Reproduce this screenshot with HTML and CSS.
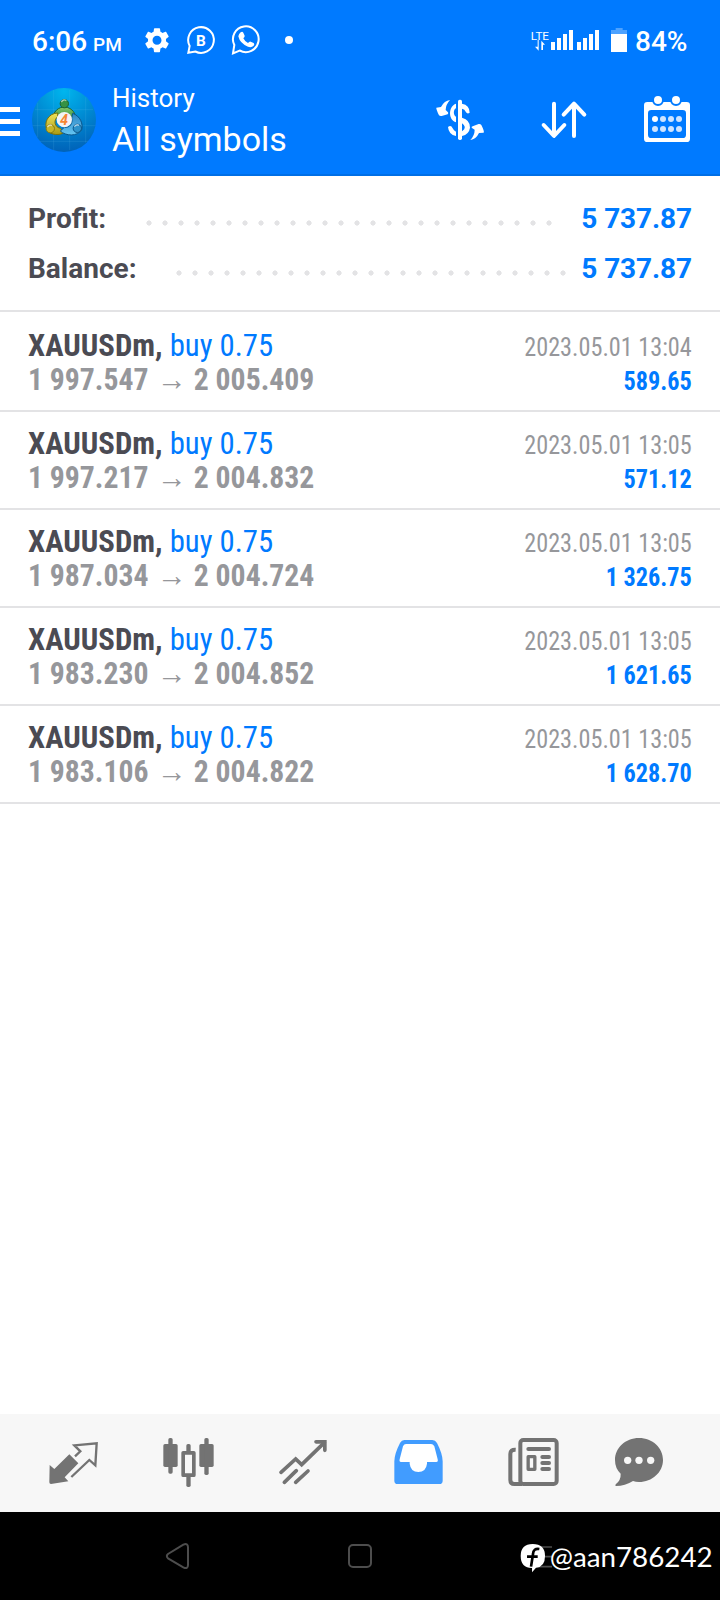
FILE: index.html
```html
<!DOCTYPE html>
<html lang="en">
<head>
<meta charset="utf-8">
<title>History</title>
<link rel="stylesheet" href="styles.css">
</head>
<body>
<div class="screen">
  <header class="top">
    <div class="status">
      <div class="clock">6:06 <span class="ampm">PM</span></div>
      <svg class="notifs" viewBox="426 60 474 120" fill="none" stroke="#fff" stroke-width="6">
        <path transform="translate(426 75.500) scale(3.75)" fill="#fff" stroke="none" d="M19.140 12.940c.040-.300.060-.610.060-.940 0-.320-.020-.640-.070-.940l2.030-1.580c.180-.140.230-.410.120-.610l-1.920-3.320c-.120-.220-.370-.290-.590-.220l-2.390.960c-.500-.380-1.030-.700-1.620-.940l-.360-2.540c-.040-.240-.240-.410-.480-.410h-3.840c-.240 0-.430.170-.470.410l-.360 2.540c-.590.240-1.130.570-1.620.940l-2.390-.960c-.220-.080-.470 0-.590.220L2.740 8.870c-.120.210-.080.470.120.610l2.030 1.580c-.050.300-.090.630-.090.940s.020.640.070.940l-2.030 1.580c-.180.140-.230.410-.120.610l1.920 3.320c.120.220.370.290.590.220l2.390-.960c.500.380 1.030.700 1.620.940l.360 2.540c.050.240.240.410.480.410h3.840c.240 0 .440-.170.470-.410l.360-2.540c.590-.240 1.130-.560 1.620-.940l2.390.960c.220.080.470 0 .590-.220l1.920-3.320c.120-.220.070-.470-.120-.610l-2.010-1.580zM12 15.600c-1.980 0-3.600-1.620-3.600-3.600s1.620-3.600 3.600-3.600 3.600 1.620 3.600 3.600-1.620 3.600-3.600 3.600z"/>
        <path d="M586 154.500 A38.500 38.500 0 1 0 569 138 L565 158Z"/>
        <text x="603" y="137" class="biz">B</text>
        <path d="M719 151.500 A38.500 38.500 0 1 0 703 135 L699 160Z"/>
        <path fill="#fff" stroke="none" d="M722 97 q5-4 8 1 l4 9 q1 3-4 8 q4 9 14 14 q5-6 8-4 l9 4 q4 3 0 8 q-7 7-17 3 q-24-9-29-31 q0-6 7-12z"/>
        <circle cx="867" cy="120" r="12" fill="#fff" stroke="none"/>
      </svg>
      <svg class="signal" viewBox="510 60 300 120" fill="#fff">
        <text x="512" y="120" class="lte" textLength="55" lengthAdjust="spacingAndGlyphs">LTE</text>
        <path d="M533 120v20h-8l11 12v-32zM544 150v-28l11 12h-6v16z"/>
        <path d="M573 126h12v24h-12zM591 114h12v36h-12zM609 102h12v48h-12zM627 90h12v60h-12zM651 126h12v24h-12zM669 114h12v36h-12zM687 102h12v48h-12zM705 90h12v60h-12z"/>
        <path opacity=".3" d="M767 84h21v6h13v12h-48V90h14z"/>
        <path d="M753 102h48v54h-48z"/>
      </svg>
      <div class="pct">84%</div>
    </div>
    <div class="bar">
      <div class="burger"><i></i><i></i><i></i></div>
      <svg class="logo" viewBox="96 54 192 192">
        <defs>
          <radialGradient id="sky" cx=".5" cy=".05" r=".95"><stop offset="0" stop-color="#00b6ee"/><stop offset=".5" stop-color="#008bd3"/><stop offset="1" stop-color="#0062b8"/></radialGradient>
          <linearGradient id="gr" x2="0" y2="1"><stop offset="0" stop-color="#86c96c"/><stop offset="1" stop-color="#237f35"/></linearGradient>
          <linearGradient id="ye" x2="0" y2="1"><stop offset="0" stop-color="#eee45c"/><stop offset="1" stop-color="#a99a12"/></linearGradient>
          <linearGradient id="bl" x2="0" y2="1"><stop offset="0" stop-color="#2b85c4"/><stop offset="1" stop-color="#65c6f3"/></linearGradient>
        </defs>
        <circle cx="192" cy="150" r="96" fill="url(#sky)"/>
        <path d="M161 60v180M209 60v180M257 82v136M113 98v104M105 119h174M98 167h188M120 214h144" stroke="#6fc6ee" stroke-opacity=".22" stroke-width="2"/>
        <g stroke-width="3">
          <path d="M159 147 A34 34 0 1 1 226 153 L211 143 A22 22 0 0 0 174 143Z" fill="url(#gr)" stroke="#1b6530"/>
          <path d="M173 129 C143 130 130 160 142 181 C153 197 181 196 191 188 L181 175 C163 171 160 151 173 140Z" fill="url(#ye)" stroke="#79700a"/>
          <path d="M218 130 C241 138 250 162 245 179 C233 201 196 198 181 183 L193 172 C210 174 219 160 215 145Z" fill="url(#bl)" stroke="#09558b"/>
          <circle cx="193" cy="101" r="12.500" fill="#369244" stroke="#1b6530"/>
          <circle cx="151" cy="176" r="12.500" fill="#c5b52a" stroke="#877c12"/>
          <circle cx="232" cy="175" r="12.500" fill="#2d92cb" stroke="#09558b"/>
        </g>
        <path d="M184 96q7-10 15-4M142 171q7-9 14-4M223 170q7-9 14-4" stroke="#fff" stroke-opacity=".6" stroke-width="4" fill="none"/>
        <circle cx="193" cy="149" r="23" fill="#f3f3f5"/>
        <text x="192" y="164" class="four">4</text>
      </svg>
      <div class="titles">
        <div class="sub">History</div>
        <div class="title">All symbols</div>
      </div>
      <svg class="tools" viewBox="210 270 810 180" fill="none" stroke="#fff">
        <g stroke="none" fill="#fff">
          <path d="M270 300 Q253 302 243 321 L229 323 Q228 327 237 346 Q240 349 245 348 L263 343 Q266 340 264 337 L257 330 Q257 314 270 300Z"/>
          <path d="M331 420 Q348 418 357 399 L371 398 Q374 395 364 375 Q361 371 356 372 L338 379 Q332 381 336 384 L344 389 Q344 406 331 420Z"/>
          <rect x="294" y="299" width="12" height="121" rx="5"/>
          <path d="M288 311 V325 C280 328 279 346 288 350 V367 C264 360 264 319 288 311Z"/>
          <path d="M306 311 Q329 315 329 338 Q321 344 316 334 Q315 328 306 326Z"/>
          <path d="M306 353 Q331 360 330 383 Q327 403 306 408 V394 Q324 383 306 370Z"/>
          <path d="M288 408 Q266 404 264 381 Q273 374 278 385 Q281 392 288 395Z"/>
        </g>
        <path d="M582 311V407M551 375L582 408L613 375M642 408V313M611 344L642 311L673 344" stroke-width="12" stroke-linecap="round" stroke-linejoin="round"/>
        <path stroke="none" fill="#fff" fill-rule="evenodd" d="M862 306H980Q990 306 990 316V416Q990 426 980 426H862Q852 426 852 416V316Q852 306 862 306ZM874 330Q864 330 864 340V404Q864 414 874 414H968Q978 414 978 404V340Q978 330 968 330Z"/>
        <g fill="#fff" stroke="#007aff" stroke-width="6"><circle cx="894" cy="300" r="15"/><circle cx="948" cy="300" r="15"/></g>
        <g stroke="none" fill="#cfe4ff"><circle cx="885" cy="357" r="9" fill="#fff"/><circle cx="909" cy="357" r="9"/><circle cx="933" cy="357" r="9"/><circle cx="957" cy="357" r="9"/><circle cx="885" cy="387" r="9"/><circle cx="909" cy="387" r="9"/><circle cx="933" cy="387" r="9"/><circle cx="957" cy="387" r="9"/></g>
      </svg>
    </div>
  </header>

  <section class="summary">
    <div class="line"><b class="lbl profit">Profit:</b><span class="dots d-profit"></span><b class="val">5 737.87</b></div>
    <div class="line"><b class="lbl balance">Balance:</b><span class="dots d-balance"></span><b class="val">5 737.87</b></div>
  </section>

  <main class="deals">
    <div class="deal"><div><div class="sym"><b>XAUUSDm,</b> <span>buy 0.75</span></div><div class="px">1 997.547 <i>→</i> 2 005.409</div></div><div class="right"><div class="date">2023.05.01 13:04</div><div class="gain">589.65</div></div></div>
    <div class="deal"><div><div class="sym"><b>XAUUSDm,</b> <span>buy 0.75</span></div><div class="px">1 997.217 <i>→</i> 2 004.832</div></div><div class="right"><div class="date">2023.05.01 13:05</div><div class="gain">571.12</div></div></div>
    <div class="deal"><div><div class="sym"><b>XAUUSDm,</b> <span>buy 0.75</span></div><div class="px">1 987.034 <i>→</i> 2 004.724</div></div><div class="right"><div class="date">2023.05.01 13:05</div><div class="gain">1 326.75</div></div></div>
    <div class="deal"><div><div class="sym"><b>XAUUSDm,</b> <span>buy 0.75</span></div><div class="px">1 983.230 <i>→</i> 2 004.852</div></div><div class="right"><div class="date">2023.05.01 13:05</div><div class="gain">1 621.65</div></div></div>
    <div class="deal"><div><div class="sym"><b>XAUUSDm,</b> <span>buy 0.75</span></div><div class="px">1 983.106 <i>→</i> 2 004.822</div></div><div class="right"><div class="date">2023.05.01 13:05</div><div class="gain">1 628.70</div></div></div>
  </main>

  <nav class="tabs">
    <svg viewBox="0 42 360 294"><path fill="#737373" d="M208 163 L235 190 L194 232 L205 244 L153 252 Q148 252 148 247 L149 195 L163 207Z"/><path fill="none" stroke="#737373" stroke-width="7" d="M225 169 L241 154 L223 136 L290 130 L286 196 L268 180 L214 231"/></svg>
    <svg viewBox="360 42 360 294" fill="#737373"><rect x="490" y="132" width="43" height="69" rx="5"/><rect x="505" y="114" width="13" height="107" rx="5"/><rect x="598" y="132" width="43" height="69" rx="5"/><rect x="613" y="114" width="13" height="111" rx="5"/><rect x="559" y="132" width="13" height="25" rx="5"/><rect x="559" y="225" width="13" height="36" rx="5"/><rect x="549.500" y="158.500" width="32" height="67" fill="#f7f7f7" stroke="#737373" stroke-width="11" stroke-linejoin="round"/></svg>
    <svg viewBox="720 42 360 294" fill="none" stroke="#737373" stroke-width="11" stroke-linecap="round"><path d="M843 217L887 177L905 194L973 128M853 247L889 212M887 247L924 213"/><path d="M948 125.500H974.500V151" stroke-linejoin="miter"/></svg>
    <svg viewBox="0 42 360 294" fill="#419cff"><path fill="#fff" d="M125 126H226L240 188L201 220H149L110 188Z"/><path fill-rule="evenodd" d="M133 120H217Q226 120 231 129Q248 162 248 184V242Q248 252 238 252H113Q103 252 103 242V184Q103 162 120 129Q125 120 133 120ZM138 132Q132 132 129 139L119 178Q117 186 123 186H149V191Q152 216 175 216Q198 216 201 191V186H229Q235 186 233 178L223 139Q219 132 213 132Z"/></svg>
    <svg viewBox="360 42 360 294" fill="none" stroke="#737373" stroke-width="12"><rect x="481" y="120" width="109" height="132" rx="9"/><path d="M467 149Q451 148 451 162V240Q451 252 463 252H487"/><path d="M505 147H567M547 171H567M547 189H567M547 207H567" stroke-linecap="round"/><rect x="504.500" y="170" width="20" height="38" stroke-width="10" stroke-linejoin="round"/></svg>
    <svg viewBox="720 42 360 294"><path fill="#737373" d="M837 114C878 114 909 144 909 180C909 217 876 246 837 246Q827 246 819 243Q795 258 768 258Q763 256 768 252Q783 240 782 221Q765 205 765 180C765 144 796 114 837 114Z"/><g fill="#f7f7f7"><circle cx="803" cy="181" r="11"/><circle cx="837" cy="181" r="11"/><circle cx="872" cy="181" r="11"/></g></svg>
  </nav>

  <footer class="sys">
    <svg viewBox="0 336 720 264" fill="none" stroke="#4d4d4d" stroke-width="6"><path stroke-linejoin="round" d="M504 462 L550 434 Q564 428 564 442 V495 Q564 509 550 502 L504 475 Q497 468 504 462Z"/></svg>
    <svg viewBox="720 336 720 264" fill="none" stroke="#4d4d4d" stroke-width="6"><rect x="1047" y="435" width="66" height="66" rx="12"/></svg>
    <svg viewBox="360 336 720 264" fill="none" stroke="#4d4d4d" stroke-width="5"><path d="M506 441H576M506 470H576M506 500H576"/></svg>
    <svg class="mark" viewBox="480 420 600 110">
      <path fill="#fff" d="M518 432Q555 432 555 468Q555 501 528 503L516 517V504Q482 504 482 468Q482 432 518 432Z"/>
      <path fill="none" stroke="#000" stroke-width="8" d="M538 447Q520 444 519 462L513 500M501 470H533"/>
      <text x="569" y="500" textLength="489" lengthAdjust="spacingAndGlyphs">@aan786242</text>
    </svg>
  </footer>
</div>
</body>
</html>
```
FILE: styles.css
```css
* { box-sizing: border-box; }
body { margin: 0; background: #fff; font-family: Roboto, "Liberation Sans", sans-serif; }
svg { display: block; flex: none; }
.screen { display: flex; flex-direction: column; width: 720px; height: 1600px; }

.top { height: 176px; background: #007aff; border-bottom: 2px solid #006fe6; color: #fff; }
.status { display: flex; height: 80px; padding: 20px 0 18px 32px; font-weight: 500; font-size: 28px; line-height: 43px; }
.clock { width: 110px; white-space: nowrap; }
.ampm { font-size: 19px; margin-left: -1px; }
.notifs { width: 158px; height: 40px; }
.signal { width: 100px; height: 40px; margin-left: 230px; }
.pct { margin-left: 5px; }
.biz { font: bold 46px Roboto, sans-serif; fill: #fff; stroke: none; text-anchor: middle; }
.lte { font: 35px Roboto, sans-serif; }

.bar { display: flex; height: 94px; }
.burger { display: flex; flex-direction: column; gap: 7px; width: 20px; padding-top: 27px; }
.burger i { height: 5px; background: #fff; }
.logo { width: 64px; height: 64px; margin: 8px 0 0 12px; }
.four { font: bold italic 43px Roboto, sans-serif; fill: #f58634; text-anchor: middle; }
.titles { width: 318px; padding-left: 16px; }
.sub { font-size: 26px; line-height: 36px; }
.title { font-size: 34px; line-height: 46px; }
.tools { width: 270px; height: 60px; margin: 10px 0 0 16px; }

.summary { height: 136px; padding: 17px 28px 0; border-bottom: 2px solid #e3e3e5; }
.line { display: flex; height: 50px; line-height: 51px; font-size: 28px; }
.lbl { color: #4b4b53; font-weight: 700; letter-spacing: 0; }
.profit { width: 112.5px; }
.balance { width: 142.5px; }
.dots { height: 16px; margin-top: 22px; background: radial-gradient(circle, #e3e3e5 2.300px, transparent 2.900px) 0 0 / 16px 16px; }
.d-profit { width: 416px; }
.d-balance { width: 400px; }
.val { margin-left: auto; color: #007aff; font-weight: 700; letter-spacing: -.1px; }

/* The deal rows use figures narrower than the condensed face provides. */
.deals { flex: 1; font-family: "Roboto Condensed", Roboto, sans-serif; }
.deal { display: flex; justify-content: space-between; height: 98px; padding: 14px 28px; border-bottom: 2px solid #e3e3e5; font-size: 32px; line-height: 34px; white-space: nowrap; }
.deal:first-child { height: 100px; padding-top: 16px; }
.sym { transform: scaleX(.96); transform-origin: 0 0; }
.sym b { color: #4b4b53; }
.sym span { color: #007aff; }
.px { color: #96979b; font-weight: 700; transform: scaleX(.928); transform-origin: 0 0; }
.px i { font-style: normal; font-weight: 400; margin: 0 .5px 0 1.5px; }
.right { padding-top: 2px; font-size: 26px; text-align: right; transform: scaleX(.932); transform-origin: 100% 0; }
.date { color: #96979b; }
.gain { color: #007aff; font-weight: 700; }

.tabs { display: flex; height: 98px; background: #f7f7f7; }
.tabs svg { width: 120px; height: 98px; }

.sys { position: relative; display: flex; height: 88px; background: #000; }
.sys svg { width: 240px; height: 88px; }
.sys .mark { position: absolute; left: 520px; top: 28px; width: 200px; height: 36.670px; }
.mark text { font: 82px Lato, sans-serif; fill: #fff; }
```
